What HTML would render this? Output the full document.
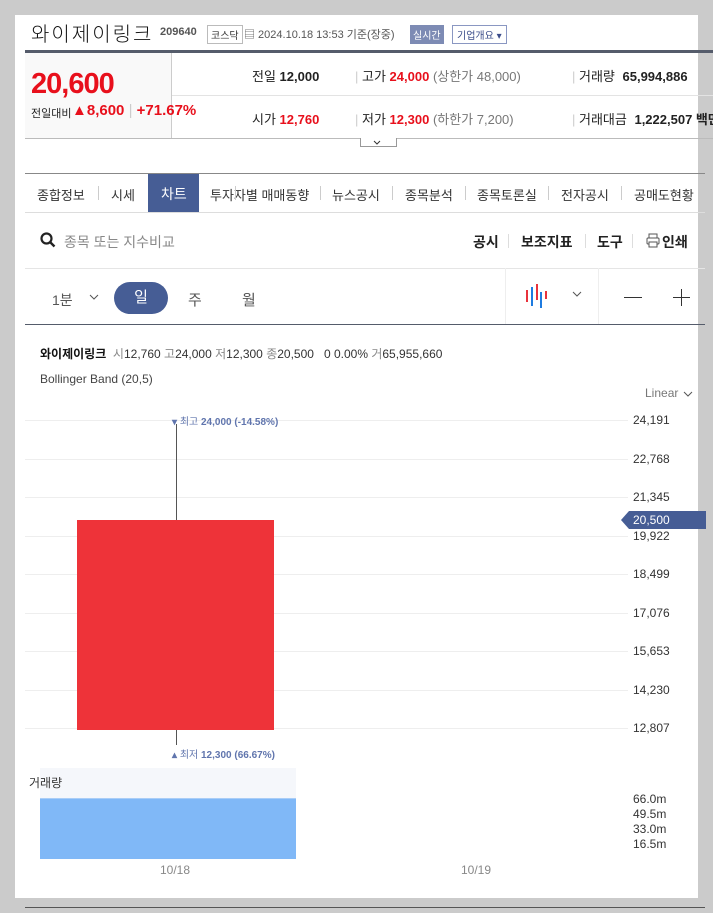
<!DOCTYPE html><html><head><meta charset="utf-8"><style>
body{margin:0;width:713px;height:913px;background:#cbcbcb;font-family:"Liberation Sans","Noto Sans CJK KR",sans-serif;position:relative;overflow:hidden;color:#222}
.a{position:absolute;white-space:nowrap}
.panel{position:absolute;left:15px;top:15px;width:683px;height:883px;background:#fff}
.red{color:#e8101c}
.g{position:absolute;left:25px;width:603px;height:1px;background:#eeeeee}
.yl{position:absolute;left:633px;font-size:12px;color:#333}
.tab{font-size:13px;color:#333;top:185px}
.sep{position:absolute;width:1px;background:#ccc}
</style></head><body>
<div class="panel"></div>
<div class="a" style="left:31px;top:18px;font-size:20px;color:#111;letter-spacing:2px;font-weight:300">와이제이링크</div>
<div class="a" style="left:160px;top:26px;font-size:11px;font-weight:bold;color:#555">209640</div>
<div class="a" style="left:207px;top:25px;font-size:10px;border:1px solid #bbb;padding:1px 3px;color:#333">코스닥</div>
<div class="a" style="left:244px;top:26px;font-size:11px;color:#555">▤ 2024.10.18 13:53 기준(장중)</div>
<div class="a" style="left:410px;top:25px;font-size:10px;background:#7d8bb4;color:#fff;padding:2px 3px">실시간</div>
<div class="a" style="left:452px;top:25px;font-size:10px;border:1px solid #8a97c2;color:#3b4d8a;padding:1px 4px">기업개요 ▾</div>
<div class="a" style="left:25px;top:50px;width:688px;height:3px;background:#555c6b"></div>
<div class="a" style="left:25px;top:53px;width:146px;height:85px;background:#f9f9f9;border-right:1px solid #ccc"></div>
<div class="a" style="left:25px;top:138px;width:688px;height:1px;background:#bbb"></div>
<div class="a" style="left:172px;top:95px;width:541px;height:1px;background:#e3e3e3"></div>
<div class="a red" style="left:31px;top:68px;font-size:29px;font-weight:bold;letter-spacing:-1px">20,600</div>
<div class="a" style="left:31px;top:105px;font-size:11px;color:#222">전일대비</div>
<div class="a red" style="left:72px;top:102px;font-size:15px;font-weight:bold">▲8,600 <span style="color:#ccc;font-weight:normal">|</span> +71.67%</div>
<div class="a" style="left:252px;top:66px;font-size:13px"><span>전일</span> <b>12,000</b></div>
<div class="a" style="left:355px;top:66px;font-size:13px"><span style="color:#ccc">|</span> 고가 <b class="red">24,000</b> <span style="color:#777">(상한가 48,000)</span></div>
<div class="a" style="left:572px;top:66px;font-size:13px"><span style="color:#ccc">|</span> 거래량 <b style="margin-left:4px">65,994,886</b></div>
<div class="a" style="left:252px;top:109px;font-size:13px">시가 <b class="red">12,760</b></div>
<div class="a" style="left:355px;top:109px;font-size:13px"><span style="color:#ccc">|</span> 저가 <b class="red">12,300</b> <span style="color:#777">(하한가 7,200)</span></div>
<div class="a" style="left:572px;top:109px;font-size:13px"><span style="color:#ccc">|</span> 거래대금 <b style="margin-left:4px">1,222,507 백만</b></div>
<div class="a" style="left:360px;top:138px;width:35px;height:8px;border:1px solid #999;border-top:none;background:#fff"></div>
<svg class="a" style="left:373px;top:140px" width="8" height="5"><path d="M1 1L4 4L7 1" stroke="#333" fill="none"/></svg>
<div class="a" style="left:25px;top:173px;width:680px;height:1px;background:#888"></div>
<div class="a" style="left:25px;top:212px;width:680px;height:1px;background:#ddd"></div>
<div class="a" style="left:148px;top:174px;width:51px;height:38px;background:#465d95"></div>
<div class="a tab" style="left:37px">종합정보</div>
<div class="a tab" style="left:111px">시세</div>
<div class="a tab" style="left:161px;color:#fff;font-size:14px;top:184px">차트</div>
<div class="a tab" style="left:210px">투자자별 매매동향</div>
<div class="a tab" style="left:332px">뉴스공시</div>
<div class="a tab" style="left:405px">종목분석</div>
<div class="a tab" style="left:477px">종목토론실</div>
<div class="a tab" style="left:561px">전자공시</div>
<div class="a tab" style="left:634px">공매도현황</div>
<div class="sep" style="left:98px;top:186px;height:14px"></div><div class="sep" style="left:235px;top:186px;height:14px"></div><div class="sep" style="left:320px;top:186px;height:14px"></div><div class="sep" style="left:392px;top:186px;height:14px"></div><div class="sep" style="left:465px;top:186px;height:14px"></div><div class="sep" style="left:548px;top:186px;height:14px"></div><div class="sep" style="left:621px;top:186px;height:14px"></div>
<svg class="a" style="left:40px;top:232px" width="16" height="16"><circle cx="6.5" cy="6.5" r="5" stroke="#222" stroke-width="2.2" fill="none"/><line x1="10" y1="10" x2="14.5" y2="14.5" stroke="#222" stroke-width="2.4"/></svg>
<div class="a" style="left:64px;top:232px;font-size:14px;color:#888">종목 또는 지수비교</div>
<div class="a" style="left:473px;top:232px;font-size:14px;font-weight:bold;color:#222">공시</div>
<div class="a" style="left:521px;top:232px;font-size:14px;font-weight:bold">보조지표</div>
<div class="a" style="left:597px;top:232px;font-size:14px;font-weight:bold">도구</div>
<svg class="a" style="left:646px;top:233px" width="14" height="15"><rect x="3" y="1" width="8" height="4" fill="none" stroke="#555"/><rect x="1" y="5" width="12" height="6" rx="1" fill="none" stroke="#555"/><rect x="3" y="9" width="8" height="5" fill="#fff" stroke="#555"/></svg>
<div class="a" style="left:662px;top:232px;font-size:14px;font-weight:bold">인쇄</div>
<div class="sep" style="left:508px;top:234px;height:14px;background:#ddd"></div><div class="sep" style="left:585px;top:234px;height:14px;background:#ddd"></div><div class="sep" style="left:632px;top:234px;height:14px;background:#ddd"></div>
<div class="a" style="left:25px;top:268px;width:680px;height:1px;background:#e5e5e5"></div>
<div class="a" style="left:25px;top:324px;width:680px;height:1px;background:#555c6b"></div>
<div class="sep" style="left:505px;top:268px;height:56px;background:#eee"></div><div class="sep" style="left:598px;top:268px;height:56px;background:#eee"></div>
<div class="a" style="left:52px;top:290px;font-size:14px;color:#555">1분</div>
<svg class="a" style="left:89px;top:294px" width="10" height="6"><path d="M1 1L5 5L9 1" stroke="#555" fill="none"/></svg>
<div class="a" style="left:114px;top:282px;width:54px;height:32px;border-radius:16px;background:#465d95;color:#fff;font-size:15px;text-align:center;line-height:32px">일</div>
<div class="a" style="left:188px;top:289px;font-size:15px;color:#555">주</div>
<div class="a" style="left:242px;top:289px;font-size:15px;color:#555">월</div>
<svg class="a" style="left:525px;top:284px" width="26" height="26"><line x1="2" y1="6" x2="2" y2="18" stroke="#e8323c" stroke-width="2"/><line x1="7" y1="3" x2="7" y2="22" stroke="#1e7be0" stroke-width="2"/><line x1="12" y1="0" x2="12" y2="16" stroke="#e8323c" stroke-width="2"/><line x1="16" y1="8" x2="16" y2="24" stroke="#1e7be0" stroke-width="2"/><line x1="21" y1="7" x2="21" y2="15" stroke="#e8323c" stroke-width="2"/></svg>
<svg class="a" style="left:572px;top:291px" width="10" height="6"><path d="M1 1L5 5L9 1" stroke="#555" fill="none"/></svg>
<div class="a" style="left:624px;top:297px;width:18px;height:1px;background:#333"></div>
<div class="a" style="left:673px;top:297px;width:17px;height:1px;background:#333"></div>
<div class="a" style="left:681px;top:289px;width:1px;height:17px;background:#333"></div>
<div class="a" style="left:40px;top:345px;font-size:12px;color:#333"><b style="color:#111">와이제이링크</b> &nbsp;<span style="color:#888">시</span>12,760 <span style="color:#888">고</span>24,000 <span style="color:#888">저</span>12,300 <span style="color:#888">종</span>20,500 &nbsp;&nbsp;0 0.00% <span style="color:#888">거</span>65,955,660</div>
<div class="a" style="left:40px;top:372px;font-size:12px;color:#444">Bollinger Band (20,5)</div>
<div class="a" style="left:645px;top:386px;font-size:12px;color:#777">Linear</div>
<svg class="a" style="left:683px;top:391px" width="10" height="6"><path d="M1 1L5 5L9 1" stroke="#555" fill="none"/></svg>
<div class="g" style="top:420px"></div><div class="g" style="top:459px"></div><div class="g" style="top:497px"></div><div class="g" style="top:536px"></div><div class="g" style="top:574px"></div><div class="g" style="top:613px"></div><div class="g" style="top:651px"></div><div class="g" style="top:690px"></div><div class="g" style="top:728px"></div>
<div class="yl" style="top:413px">24,191</div><div class="yl" style="top:452px">22,768</div><div class="yl" style="top:490px">21,345</div><div class="yl" style="top:529px">19,922</div><div class="yl" style="top:567px">18,499</div><div class="yl" style="top:606px">17,076</div><div class="yl" style="top:644px">15,653</div><div class="yl" style="top:683px">14,230</div><div class="yl" style="top:721px">12,807</div>
<svg class="a" style="left:621px;top:511px" width="85" height="18"><path d="M8 0H85V18H8L0 9Z" fill="#465d95"/></svg>
<div class="a" style="left:633px;top:513px;font-size:12px;color:#fff">20,500</div>
<div class="a" style="left:176px;top:424px;width:1px;height:321px;background:#555"></div>
<div class="a" style="left:77px;top:520px;width:197px;height:210px;background:#ee3339"></div>
<div class="a" style="left:172px;top:413px;font-size:10px;color:#6075ad;font-weight:bold">▾ <span style="font-weight:normal">최고</span> 24,000 (-14.58%)</div>
<div class="a" style="left:172px;top:746px;font-size:10px;color:#6075ad;font-weight:bold">▴ <span style="font-weight:normal">최저</span> 12,300 (66.67%)</div>
<div class="a" style="left:40px;top:768px;width:256px;height:30px;background:#f5f7fb"></div>
<div class="a" style="left:29px;top:774px;font-size:12px;color:#333">거래량</div>
<div class="a" style="left:40px;top:798px;width:256px;height:60px;background:#80b8f7;border-top:1px solid #a9cdf7"></div>
<div class="yl" style="top:792px">66.0m</div><div class="yl" style="top:807px">49.5m</div><div class="yl" style="top:822px">33.0m</div><div class="yl" style="top:837px">16.5m</div>
<div class="a" style="left:160px;top:863px;font-size:12px;color:#888">10/18</div>
<div class="a" style="left:461px;top:863px;font-size:12px;color:#888">10/19</div>
<div class="a" style="left:25px;top:907px;width:680px;height:1px;background:#555"></div>
</body></html>
